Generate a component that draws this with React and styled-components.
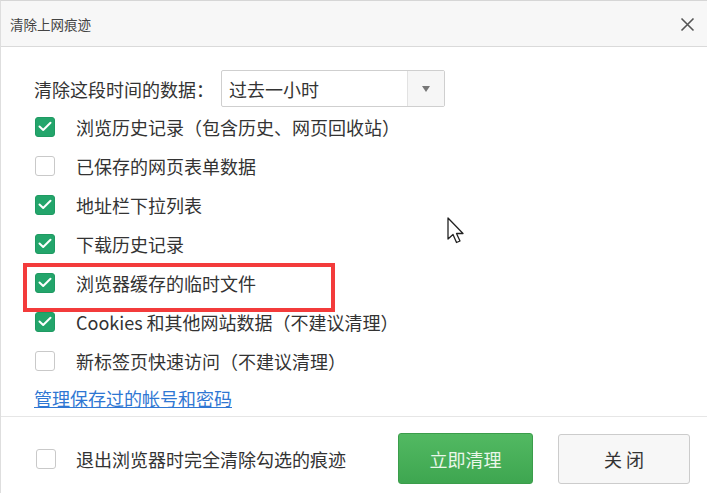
import React from "react";
import styled, { createGlobalStyle, css } from "styled-components";

const Global = createGlobalStyle`
  html, body { margin: 0; padding: 0; background: #fff; }
  body { font-family: "Noto Sans CJK SC", "Noto Sans", sans-serif; }
  * { box-sizing: border-box; }
`;

const Dialog = styled.div`
  position: relative;
  width: 707px;
  height: 493px;
  background: #fff;
  border-top: 1px solid #d6d6d6;
  border-left: 1px solid #dedede;
  display: flex;
  flex-direction: column;
  overflow: hidden;
`;

const TitleBar = styled.div`
  height: 46px;
  flex: none;
  display: flex;
  align-items: center;
  justify-content: space-between;
  padding: 0 9px 0 9px;
  background: #f7f7f7;
  border-bottom: 1px solid #dadada;
  color: #444;
  font-size: 13.5px;
`;

const CloseButton = styled.button`
  width: 22px;
  height: 22px;
  border: 0;
  background: transparent;
  padding: 0;
  display: flex;
  align-items: center;
  justify-content: center;
  margin-top: 2px;
`;

const Content = styled.div`
  flex: 1;
  padding: 23px 0 0 33px;
  display: flex;
  flex-direction: column;
  color: #333;
  font-size: 18px;
`;

const TimeRow = styled.div`
  display: flex;
  align-items: center;
  height: 37px;
`;

const TimeLabel = styled.span`
  width: 187px;
  flex: none;
`;

const Select = styled.div`
  width: 224px;
  height: 37px;
  border: 1px solid #cfcfcf;
  border-radius: 2px;
  display: flex;
  align-items: stretch;
  background: #fff;
`;

const SelectValue = styled.div`
  flex: 1;
  display: flex;
  align-items: center;
  padding-left: 7px;
  color: #333;
`;

const SelectArrow = styled.div`
  width: 37px;
  border-left: 1px solid #e2e2e2;
  background: #f6f6f6;
  display: flex;
  align-items: center;
  justify-content: center;
  &::before {
    content: "";
    border-left: 4px solid transparent;
    border-right: 4px solid transparent;
    border-top: 6px solid #777;
  }
`;

const OptionRow = styled.label`
  position: relative;
  display: flex;
  align-items: center;
  gap: 21px;
  height: 39px;
  padding-left: 1px;
  ${(p) =>
    p.$highlight &&
    css`
      &::after {
        content: "";
        position: absolute;
        left: -11px;
        top: 0;
        width: 304px;
        height: 41px;
        border: 4px solid #f33b3b;
        pointer-events: none;
      }
    `}
`;

const Box = styled.span`
  width: 20px;
  height: 20px;
  flex: none;
  border-radius: 3px;
  display: flex;
  align-items: center;
  justify-content: center;
  ${(p) =>
    p.$checked
      ? css`
          background: #23a56b;
          border: 1px solid #1f9a62;
        `
      : css`
          background: #fff;
          border: 1px solid #c9c9c9;
        `}
`;

const LinkRow = styled.div`
  height: 36px;
  display: flex;
  align-items: center;
`;

const ManageLink = styled.a`
  color: #2f77d3;
  text-decoration: underline;
  font-size: 18px;
`;

const Footer = styled.div`
  flex: none;
  border-top: 1px solid #e6e6e6;
  padding: 16px 17px 9px 35px;
  display: flex;
  align-items: center;
  color: #333;
  font-size: 18px;
`;

const FooterCheck = styled.label`
  display: flex;
  align-items: center;
  gap: 20px;
  flex: 1;
`;

const Button = styled.button`
  height: 51px;
  border-radius: 3px;
  font-family: inherit;
  font-size: 18px;
  padding: 0;
  ${(p) =>
    p.$primary
      ? css`
          width: 135px;
          margin-right: 25px;
          background: linear-gradient(#52b962, #3ea650);
          border: 1px solid #3b9d4b;
          color: #eaf7ea;
        `
      : css`
          width: 132px;
          height: 50px;
          background: #f7f7f7;
          border: 1px solid #cccccc;
          color: #333;
          letter-spacing: 4px;
          text-indent: 4px;
        `}
`;

const Cursor = styled.svg`
  position: absolute;
  left: 446px;
  top: 216px;
`;

const Check = ({ checked }) => (
  <Box $checked={checked}>
    {checked && (
      <svg width="14" height="11" viewBox="0 0 14 11">
        <path d="M1.5 5.5 L5.2 9 L12.5 1.8" fill="none" stroke="#fff" strokeWidth="2" strokeLinecap="round" strokeLinejoin="round" />
      </svg>
    )}
  </Box>
);

const options = [
  { text: "浏览历史记录（包含历史、网页回收站）", checked: true },
  { text: "已保存的网页表单数据", checked: false },
  { text: "地址栏下拉列表", checked: true },
  { text: "下载历史记录", checked: true },
  { text: "浏览器缓存的临时文件", checked: true, highlight: true },
  { text: "Cookies 和其他网站数据（不建议清理）", checked: true },
  { text: "新标签页快速访问（不建议清理）", checked: false },
];

export default function App() {
  return (
    <>
      <Global />
      <Dialog>
        <TitleBar>
          <span>清除上网痕迹</span>
          <CloseButton aria-label="关闭">
            <svg width="15" height="15" viewBox="0 0 15 15">
              <path d="M1.5 1.5 L13.5 13.5 M13.5 1.5 L1.5 13.5" stroke="#555" strokeWidth="1.6" />
            </svg>
          </CloseButton>
        </TitleBar>
        <Content>
          <TimeRow>
            <TimeLabel>清除这段时间的数据：</TimeLabel>
            <Select>
              <SelectValue>过去一小时</SelectValue>
              <SelectArrow />
            </Select>
          </TimeRow>
          {options.map((o) => (
            <OptionRow key={o.text} $highlight={o.highlight}>
              <Check checked={o.checked} />
              <span>{o.text}</span>
            </OptionRow>
          ))}
          <LinkRow>
            <ManageLink>管理保存过的帐号和密码</ManageLink>
          </LinkRow>
        </Content>
        <Footer>
          <FooterCheck>
            <Check checked={false} />
            <span>退出浏览器时完全清除勾选的痕迹</span>
          </FooterCheck>
          <Button $primary>立即清理</Button>
          <Button>关闭</Button>
        </Footer>
        <Cursor width="20" height="30" viewBox="0 0 20 30">
          <path d="M1 1 L1 22 L6 17.5 L9.5 25.5 L13 24 L9.5 16.5 L16 16.5 Z" fill="#fff" stroke="#222" strokeWidth="1.3" strokeLinejoin="round" />
        </Cursor>
      </Dialog>
    </>
  );
}
